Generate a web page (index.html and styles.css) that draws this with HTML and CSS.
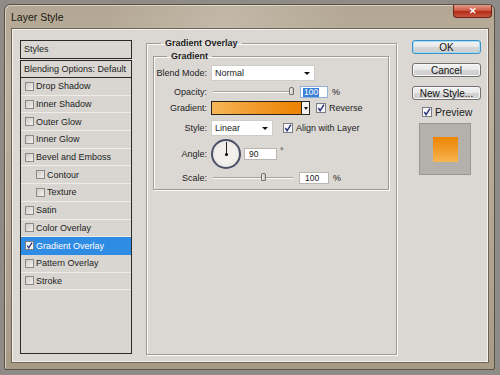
FILE: index.html
```html
<!DOCTYPE html>
<html lang="en">
<head>
  <meta charset="UTF-8">
  <title>Layer Style</title>
  <link rel="stylesheet" href="styles.css">
</head>
<body>

  <div class="window">
    <div class="titlebar">
      <span class="title">Layer Style</span>
      <span class="close">&#x2715;</span>
    </div>

    <div class="client">
      <div class="styles-list">
        <div class="list-head">Styles</div>
        <div class="list-head blend">Blending Options: Default</div>
        <div class="list-body">
          <div class="item"><span class="check"></span>Drop Shadow</div>
          <div class="item"><span class="check"></span>Inner Shadow</div>
          <div class="item"><span class="check"></span>Outer Glow</div>
          <div class="item"><span class="check"></span>Inner Glow</div>
          <div class="item"><span class="check"></span>Bevel and Emboss</div>
          <div class="item sub"><span class="check"></span>Contour</div>
          <div class="item sub"><span class="check"></span>Texture</div>
          <div class="item"><span class="check"></span>Satin</div>
          <div class="item"><span class="check"></span>Color Overlay</div>
          <div class="item active"><span class="check on"><svg viewBox="0 0 9 9"><path d="M1.5 4.5 L3.5 7.5 L7.8 0.8" /></svg></span>Gradient Overlay</div>
          <div class="item"><span class="check"></span>Pattern Overlay</div>
          <div class="item"><span class="check"></span>Stroke</div>
        </div>
      </div>

      <fieldset class="group outer">
        <legend>Gradient Overlay</legend>
        <fieldset class="group inner">
          <legend>Gradient</legend>

          <div class="row r-blend">
            <label>Blend Mode:</label>
            <div class="select w-blend">Normal<span class="arrow"></span></div>
          </div>

          <div class="row r-opacity">
            <label>Opacity:</label>
            <div class="slider w-opacity"><span class="thumb" style="left: 76px"></span></div>
            <div class="field f-opacity"><span class="sel">100</span></div>
            <span class="unit">%</span>
          </div>

          <div class="row r-gradient">
            <label>Gradient:</label>
            <div class="grad-bar"></div>
            <div class="grad-drop"><span class="arrow"></span></div>
            <span class="check box on"><svg viewBox="0 0 9 9"><path d="M1.5 4.5 L3.5 7.5 L7.8 0.8" /></svg></span>
            <span class="opt">Reverse</span>
          </div>

          <div class="row r-style">
            <label>Style:</label>
            <div class="select w-style">Linear<span class="arrow"></span></div>
            <span class="check box on align"><svg viewBox="0 0 9 9"><path d="M1.5 4.5 L3.5 7.5 L7.8 0.8" /></svg></span>
            <span class="opt">Align with Layer</span>
          </div>

          <div class="row r-angle">
            <label>Angle:</label>
            <div class="dial"><span class="hand"></span><span class="pin"></span></div>
            <div class="field f-angle">90</div>
            <span class="deg">&deg;</span>
          </div>

          <div class="row r-scale">
            <label>Scale:</label>
            <div class="slider w-scale"><span class="thumb" style="left: 48px"></span></div>
            <div class="field f-scale">100</div>
            <span class="unit">%</span>
          </div>
        </fieldset>
      </fieldset>

      <div class="actions">
        <button class="btn default">OK</button>
        <button class="btn">Cancel</button>
        <button class="btn">New Style...</button>
        <div class="preview-opt">
          <span class="check box on"><svg viewBox="0 0 9 9"><path d="M1.5 4.5 L3.5 7.5 L7.8 0.8" /></svg></span>
          <span>Preview</span>
        </div>
        <div class="swatch"><div class="swatch-fill"></div></div>
      </div>
    </div>
  </div>

</body>
</html>
```

FILE: styles.css
```css
body {
  margin: 0;
  background: #8f8b86;
  font-family: "Liberation Sans", Arial, sans-serif;
  font-size: 9px;
  color: #1c1c1c;
}

.window {
  margin: 4px 0 0 4px;
  width: 491px;
  height: 366px;
  box-sizing: border-box;
  border: 1px solid #5a5044;
  border-radius: 6px 6px 2px 2px;
  background: linear-gradient(180deg, #b3a793 0%, #bdb2a0 20%, #a89b86 100%);
  padding: 0 5px 6px 6px;
  display: flex;
  flex-direction: column;
  box-shadow: inset 1px 1px 0 #d9d0c2;
}

.titlebar {
  height: 23px;
  display: flex;
  align-items: center;
  background: linear-gradient(100deg, rgba(255,255,255,0) 20%, rgba(255,255,255,0.18) 45%, rgba(255,255,255,0) 70%);
}
.title {
  font-size: 10.5px;
  color: #1a1713;
  margin-top: 1px;
}
.close {
  margin-left: auto;
  margin-right: -3px;
  align-self: flex-start;
  width: 39px;
  height: 13px;
  box-sizing: border-box;
  border: 1px solid #6e2418;
  border-top: none;
  border-radius: 0 0 4px 4px;
  background: linear-gradient(180deg, #e49a8a 0%, #cf5a45 45%, #b22d17 55%, #c9563e 100%);
  color: #fff;
  font-size: 9px;
  font-weight: bold;
  text-align: center;
  line-height: 12px;
}

.client {
  flex: 1;
  display: flex;
  align-items: flex-start;
  background: #dbd8d4;
  border: 1px solid #6d6253;
  box-shadow: inset 0 0 0 1px #f4f2ef;
  padding: 11px 0 0 8px;
}

/* left list */
.styles-list {
  width: 112px;
  height: 314px;
  display: flex;
  flex-direction: column;
}
.list-head {
  border: 1px solid #2a2a2a;
  height: 17px;
  line-height: 17px;
  padding-left: 3px;
  background: #dad7d3;
}
.list-head.blend {
  margin-top: 1px;
  height: 16px;
  line-height: 16px;
}
.list-body {
  flex: 1;
  border: 1px solid #2a2a2a;
  border-top: none;
  background: #d9d6d2;
}
.item {
  height: 16.7px;
  border-bottom: 1px solid #eeece9;
  display: flex;
  align-items: center;
  padding-left: 4px;
}
.item.sub { padding-left: 15px; }
.item.active {
  background: #2f8ce4;
  color: #fff;
  border-bottom-color: #2f8ce4;
}

.check {
  width: 9px;
  height: 9px;
  box-sizing: border-box;
  border: 1px solid #8b8985;
  background: linear-gradient(135deg, #cfccc8, #f2f1ef);
  margin-right: 2px;
  flex: none;
  display: inline-flex;
}
.check.on {
  background: #f7f7f7;
  border-color: #7b7d86;
}
.check svg {
  width: 100%;
  height: 100%;
  fill: none;
  stroke: #2a2f7c;
  stroke-width: 1.6;
}
.check.box {
  width: 10px;
  height: 10px;
}

/* settings */
.group {
  margin: 0;
  border: 1px solid #9f9b96;
  box-shadow: 1px 1px 0 #fbfaf8, inset 1px 1px 0 #fbfaf8;
}
.group legend {
  font-weight: bold;
  font-size: 9px;
  line-height: 10px;
  padding: 0 4px;
  margin-left: 8px;
}
.outer {
  margin-left: 14px;
  width: 251px;
  height: 317px;
  box-sizing: border-box;
  margin-top: -2px;
  padding: 3px 7px 0 6px;
}
.inner {
  padding: 0 4px 5px 1px;
}
.inner legend {
  margin-left: 12px;
}

.row {
  display: flex;
  align-items: center;
}
.row label {
  width: 52px;
  text-align: right;
  margin-right: 4px;
  flex: none;
  white-space: nowrap;
}
.r-blend { height: 16px; margin-top: 4px; }
.r-opacity { height: 12px; margin-top: 5px; }
.r-gradient { height: 14px; margin-top: 3px; }
.r-style { height: 16px; margin-top: 5px; }
.r-angle { height: 30px; margin-top: 3px; }
.r-scale { height: 12px; margin-top: 3px; }

.select {
  height: 16px;
  box-sizing: border-box;
  background: #fff;
  border: 1px solid #cfccc8;
  display: flex;
  align-items: center;
  padding-left: 3px;
}
.w-blend { width: 104px; }
.w-style { width: 62px; }
.arrow {
  margin-left: auto;
  margin-right: 4px;
  width: 0;
  height: 0;
  border-left: 3px solid transparent;
  border-right: 3px solid transparent;
  border-top: 3px solid #111;
}

.slider {
  height: 1px;
  background: #a6a29d;
  border-bottom: 1px solid #fbfaf8;
  margin-left: 2px;
  position: relative;
}
.w-opacity { width: 78px; }
.w-scale { width: 80px; }
.thumb {
  position: absolute;
  top: -4px;
  width: 5px;
  height: 8px;
  box-sizing: border-box;
  border: 1px solid #6f6c69;
  border-radius: 2px 2px 1px 1px;
  background: linear-gradient(90deg, #f4f3f1, #c9c6c2);
}

.field {
  height: 12px;
  box-sizing: border-box;
  background: #fff;
  border: 1px solid #b9b6b2;
  display: flex;
  align-items: center;
  padding-left: 4px;
  font-size: 8.5px;
}
.f-opacity { width: 28px; margin-left: 9px; padding-left: 2px; border-color: #8fb4dc; }
.f-angle { width: 33px; margin-left: 3px; }
.f-scale { width: 30px; margin-left: 6px; padding-left: 5px; }
.sel {
  background: #3a7fd5;
  color: #fff;
  padding: 0 1px;
  line-height: 9px;
}
.unit { margin-left: 4px; }
.deg { margin-left: 3px; align-self: flex-start; margin-top: 7px; }

.grad-bar {
  width: 91px;
  height: 14px;
  box-sizing: border-box;
  border: 1px solid #2b2418;
  background: linear-gradient(90deg, #f5b656 0%, #f19a2a 50%, #ec8200 100%);
}
.grad-drop {
  width: 8px;
  height: 14px;
  box-sizing: border-box;
  border: 1px solid #2b2418;
  border-left: none;
  background: #f3f2f0;
  display: flex;
  align-items: center;
}
.grad-drop .arrow {
  margin: 0 auto;
  border-left-width: 2px;
  border-right-width: 2px;
}
.r-gradient .check { margin-left: 6px; margin-right: 3px; }
.r-style .check { margin-left: 10px; margin-right: 3px; }

.dial {
  width: 30px;
  height: 30px;
  box-sizing: border-box;
  border: 2px solid #4c4f6a;
  border-radius: 50%;
  background: radial-gradient(circle, #f1f0ec 50%, #dedbd4 100%);
  position: relative;
}
.hand {
  position: absolute;
  left: 12.5px;
  top: 1px;
  width: 1.5px;
  height: 12px;
  background: #222;
}
.pin {
  position: absolute;
  left: 11.8px;
  top: 11.8px;
  width: 3px;
  height: 3px;
  border-radius: 50%;
  background: #000;
}

/* buttons */
.actions {
  width: 69px;
  margin-left: 15px;
  display: flex;
  flex-direction: column;
}
.btn {
  height: 14px;
  margin-bottom: 9px;
  padding: 0;
  font-family: "Liberation Sans", Arial, sans-serif;
  font-size: 10px;
  color: #111;
  border: 1px solid #707070;
  border-radius: 3px;
  background: linear-gradient(180deg, #f3f3f3 0%, #e8e8e8 48%, #d6d6d6 52%, #cdcdcd 100%);
  box-shadow: inset 0 0 0 1px #f8f8f8;
}
.btn.default {
  border-color: #3d8fc6;
  box-shadow: inset 0 0 0 1px #9fdcf7;
}
.preview-opt {
  display: flex;
  align-items: center;
  margin-top: -3px;
  margin-left: 10px;
  font-size: 10.5px;
  height: 12px;
}
.preview-opt .check { margin-right: 3px; }
.swatch {
  margin: 5px 0 0 7px;
  width: 52px;
  height: 52px;
  box-sizing: border-box;
  border: 1px solid #9a9691;
  background: #b4b0ab;
  display: flex;
  align-items: center;
  justify-content: center;
}
.swatch-fill {
  width: 25px;
  height: 25px;
  background: linear-gradient(180deg, #ee8506 0%, #f19a26 50%, #f6b652 100%);
}
```
